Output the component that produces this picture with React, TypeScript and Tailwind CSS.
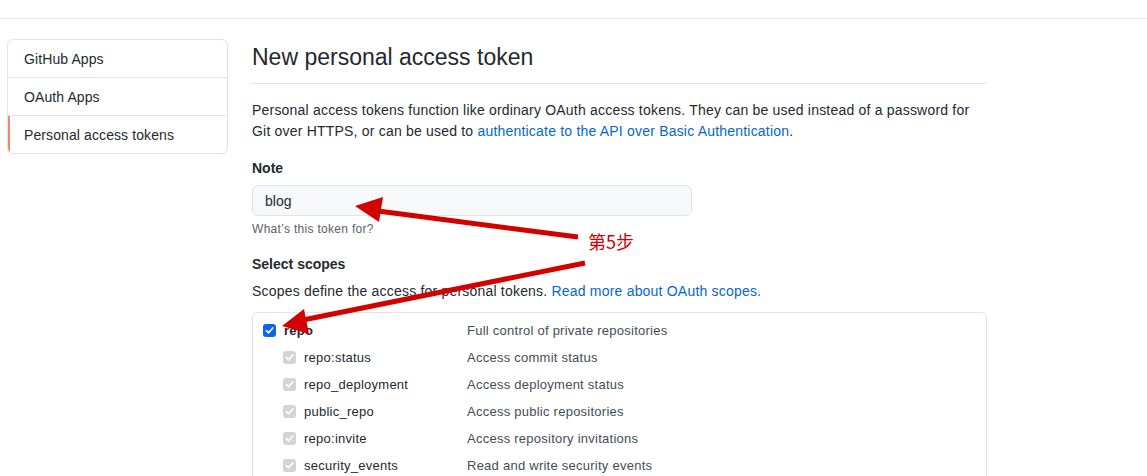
import React from 'react';

const scopes = [
  { name: 'repo:status', desc: 'Access commit status' },
  { name: 'repo_deployment', desc: 'Access deployment status' },
  { name: 'public_repo', desc: 'Access public repositories' },
  { name: 'repo:invite', desc: 'Access repository invitations' },
  { name: 'security_events', desc: 'Read and write security events' },
];

const CheckBox: React.FC<{ disabled?: boolean }> = ({ disabled }) => (
  <span
    className={
      'flex h-[13px] w-[13px] shrink-0 items-center justify-center rounded-[3px] ' +
      (disabled ? 'bg-[#d4d4d4]' : 'bg-[#0b63f0]')
    }
  >
    <svg width="9" height="9" viewBox="0 0 10 10" fill="none">
      <path d="M1.5 5.2 L4 7.6 L8.6 2.2" stroke="white" strokeWidth="1.8" strokeLinecap="round" strokeLinejoin="round" />
    </svg>
  </span>
);

const App: React.FC = () => {
  const menu = ['GitHub Apps', 'OAuth Apps', 'Personal access tokens'];

  return (
    <div className="relative min-h-[476px] bg-white text-[#24292e]" style={{ fontFamily: '"Liberation Sans", Arial, sans-serif' }}>
      <div className="h-[19px] border-b border-[#e1e4e8]" />

      <div className="flex gap-6 pl-[7px] pt-5">
        {/* Sidebar */}
        <nav className="h-fit w-[221px] shrink-0 overflow-hidden rounded-md border border-[#e1e4e8]">
          {menu.map((item, i) => (
            <div
              key={item}
              className={
                'relative flex items-center pl-4 text-sm tracking-[0.1px] ' +
                (i > 0 ? 'h-[38px] border-t border-[#e1e4e8]' : 'h-[37px]')
              }
            >
              {i === 2 && <span className="absolute left-0 top-0 h-full w-[2px] bg-[#f9826c]" />}
              {item}
            </div>
          ))}
        </nav>

        {/* Main */}
        <div className="w-[735px]">
          <h2 className="border-b border-[#e1e4e8] pb-2 text-[23px] leading-9">New personal access token</h2>

          <p className="mt-4 text-sm leading-[21px] tracking-[0.2px]">
            Personal access tokens function like ordinary OAuth access tokens. They can be used instead of a password for
            <br />
            Git over HTTPS, or can be used to{' '}
            <a className="text-[#0366d6]">authenticate to the API over Basic Authentication</a>.
          </p>

          <div className="mt-4 text-sm font-bold leading-[21px]">Note</div>
          <div className="mt-[6px] flex h-[31px] w-[440px] items-center rounded-md border border-[#e1e4e8] bg-[#f6f8fa] px-3 text-sm">
            blog
          </div>
          <div className="mt-1 text-xs leading-[18px] tracking-[0.3px] text-[#586069]">What’s this token for?</div>

          <div className="mt-4 text-sm font-bold leading-[21px]">Select scopes</div>
          <p className="mt-[6px] text-sm leading-[21px] tracking-[0.2px]">
            Scopes define the access for personal tokens.{' '}
            <a className="text-[#0366d6]">Read more about OAuth scopes.</a>
          </p>

          <div className="mt-[10px] rounded-md border border-[#e1e4e8] pb-2 pt-1 text-[13px] tracking-[0.25px]">
            <div className="flex h-[27px] items-center">
              <div className="flex w-[214px] items-center gap-2 pl-[10px]">
                <CheckBox />
                <span className="font-bold">repo</span>
              </div>
              <span className="text-[#444d56]">Full control of private repositories</span>
            </div>
            {scopes.map((s) => (
              <div key={s.name} className="flex h-[27px] items-center">
                <div className="flex w-[214px] items-center gap-2 pl-[30px]">
                  <CheckBox disabled />
                  <span>{s.name}</span>
                </div>
                <span className="text-[#444d56]">{s.desc}</span>
              </div>
            ))}
          </div>
        </div>
      </div>

      {/* Annotation overlay */}
      <svg className="pointer-events-none absolute left-0 top-0" width="1147" height="476">
        <g fill="#d40000" stroke="#d40000">
          <line x1="578" y1="237" x2="378" y2="211" strokeWidth="5" />
          <polygon points="355,206 383,197 379,222" stroke="none" />
          <line x1="585" y1="263" x2="303" y2="320" strokeWidth="5" />
          <polygon points="282,326 304,309 309,334" stroke="none" />
        </g>
      </svg>
      <div
        className="absolute left-[588px] top-[229px] text-[18px] leading-6 text-[#d40000]"
        style={{ fontFamily: '"Noto Sans CJK SC", sans-serif' }}
      >
        第5步
      </div>
    </div>
  );
};

export default App;
